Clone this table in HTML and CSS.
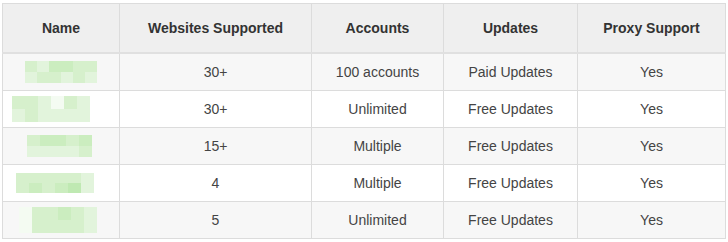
FILE: index.html
```html
<!DOCTYPE html>
<html lang="en">
<head>
  <meta charset="UTF-8">
  <meta name="viewport" content="width=device-width, initial-scale=1.0">
  <title>Tool Comparison</title>
  <link rel="stylesheet" href="styles.css">
</head>
<body>

  <!-- Comparison table -->
  <table class="compare">
    <colgroup>
      <col class="c-name">
      <col class="c-sites">
      <col class="c-acc">
      <col class="c-upd">
      <col class="c-proxy">
    </colgroup>
    <thead>
      <tr>
        <th>Name</th>
        <th>Websites Supported</th>
        <th>Accounts</th>
        <th>Updates</th>
        <th>Proxy Support</th>
      </tr>
    </thead>
    <tbody>
      <tr>
        <td class="name-cell">
          <div class="blur b1">
            <i class="g2"></i><i class="g1"></i><i class="g3"></i><i class="g3"></i><i class="g2"></i><i class="g2"></i>
            <i class="g1"></i><i class="g2"></i><i class="g2"></i><i class="g1"></i><i class="g2"></i><i class="g1"></i>
          </div>
        </td>
        <td>30+</td>
        <td>100 accounts</td>
        <td>Paid Updates</td>
        <td>Yes</td>
      </tr>
      <tr>
        <td class="name-cell">
          <div class="blur b2">
            <i class="g2"></i><i class="g2"></i><i class="g1"></i><i class="g0"></i><i class="g2"></i><i class="g1"></i>
            <i class="g1"></i><i class="g2"></i><i class="g1"></i><i class="g1"></i><i class="g1"></i><i class="g1"></i>
          </div>
        </td>
        <td>30+</td>
        <td>Unlimited</td>
        <td>Free Updates</td>
        <td>Yes</td>
      </tr>
      <tr>
        <td class="name-cell">
          <div class="blur b3">
            <i class="g2"></i><i class="g3"></i><i class="g3"></i><i class="g2"></i><i class="g3"></i>
            <i class="g1"></i><i class="g1"></i><i class="g1"></i><i class="g1"></i><i class="g2"></i>
          </div>
        </td>
        <td>15+</td>
        <td>Multiple</td>
        <td>Free Updates</td>
        <td>Yes</td>
      </tr>
      <tr>
        <td class="name-cell">
          <div class="blur b4">
            <i class="g2"></i><i class="g2"></i><i class="g2"></i><i class="g2"></i><i class="g2"></i><i class="g1"></i>
            <i class="g2"></i><i class="g3"></i><i class="g2"></i><i class="g3"></i><i class="g4"></i><i class="g1"></i>
          </div>
        </td>
        <td>4</td>
        <td>Multiple</td>
        <td>Free Updates</td>
        <td>Yes</td>
      </tr>
      <tr>
        <td class="name-cell">
          <div class="blur b5">
            <i class="g0"></i><i class="g2"></i><i class="g2"></i><i class="g3"></i><i class="g2"></i><i class="g1"></i>
            <i class="g0"></i><i class="g2"></i><i class="g2"></i><i class="g2"></i><i class="g2"></i><i class="g1"></i>
          </div>
        </td>
        <td>5</td>
        <td>Unlimited</td>
        <td>Free Updates</td>
        <td>Yes</td>
      </tr>
    </tbody>
  </table>

</body>
</html>
```

FILE: styles.css
```css
body {
  margin: 0;
  padding: 3px 0 0 2px;
  background: #fff;
  font-family: "Liberation Sans", Arial, sans-serif;
  color: #333;
}

.compare {
  width: 723px;
  border-collapse: collapse;
  table-layout: fixed;
  font-size: 14px;
  border: 1px solid #dcdcdc;
}

.c-name { width: 117px; }
.c-sites { width: 192px; }
.c-acc { width: 132px; }
.c-upd { width: 134px; }
.c-proxy { width: 148px; }

.compare th,
.compare td {
  border: 1px solid #dcdcdc;
  text-align: center;
  padding: 0;
}

.compare th {
  height: 48px;
  background: #efefef;
  font-weight: bold;
  color: #333;
  border-bottom: 2px solid #e0e0e0;
}

.compare td {
  height: 36px;
  color: #444;
}

.compare tbody tr:nth-child(odd) td {
  background: #f7f7f7;
}

.compare tbody tr:nth-child(even) td {
  background: #fff;
}

.name-cell {
  text-align: left;
}

/* blurred product names */
.blur {
  display: grid;
  grid-auto-rows: 11px;
}

.blur i {
  display: block;
}

.b1 { grid-template-columns: repeat(6, 12px); margin-left: 22px; }
.b2 { grid-template-columns: repeat(6, 13px); margin-left: 9px; grid-auto-rows: 13px; }
.b3 { grid-template-columns: repeat(5, 13px); margin-left: 24px; }
.b4 { grid-template-columns: repeat(6, 13px); margin-left: 13px; grid-auto-rows: 10px; }
.b5 { grid-template-columns: 13px repeat(5, 13px); margin-left: 16px; grid-auto-rows: 13px; }

.g0 { background: #f4fbf2; }
.g1 { background: #e2f4dc; }
.g2 { background: #d6f0cc; }
.g3 { background: #cbedbf; }
.g4 { background: #bfe9b2; }
```
